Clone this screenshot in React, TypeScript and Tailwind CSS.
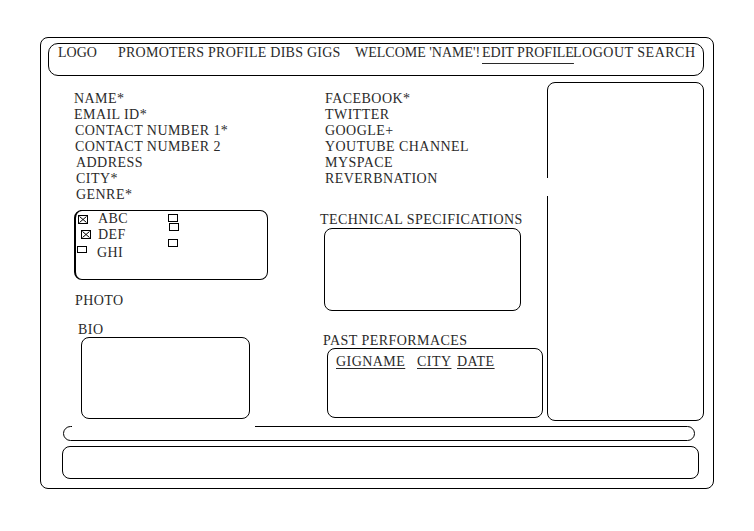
import React from "react";

const Box = ({ checked = false, w = 10, h = 9 }: { checked?: boolean; w?: number; h?: number }) => (
  <svg width={w} height={h} viewBox={`0 0 ${w} ${h}`} className="block shrink-0">
    <rect x={0.5} y={0.5} width={w - 1} height={h - 1} fill="white" stroke="black" strokeWidth={1} />
    {checked && (
      <>
        <line x1={1.5} y1={1.5} x2={w - 1.5} y2={h - 1.5} stroke="black" strokeWidth={1} />
        <line x1={w - 1.5} y1={1.5} x2={1.5} y2={h - 1.5} stroke="black" strokeWidth={1} />
      </>
    )}
  </svg>
);

const Label = ({ children, className = "" }: { children: React.ReactNode; className?: string }) => (
  <div className={`h-[16px] leading-[16px] whitespace-nowrap tracking-[0.45px] ${className}`}>
    <span className="relative top-[1px]">{children}</span>
  </div>
);

export default function App() {
  return (
    <div
      className="w-[754px] h-[531px] bg-white text-[14px] text-[#2a2a2a] overflow-hidden"
      style={{ fontFamily: '"Liberation Serif", "Times New Roman", serif' }}
    >
      <div className="ml-[40px] mt-[37px] w-[674px] h-[452px] border border-black rounded-[8px] flex flex-col">
        {/* Nav */}
        <div className="ml-[7px] mt-[5px] w-[656px] h-[33px] border border-black rounded-[10px] flex items-start pt-[1px] pl-[9px]">
          <span className="w-[60px] h-[16px] leading-[16px] whitespace-nowrap">LOGO</span>
          <span className="w-[237px] h-[16px] leading-[16px] whitespace-nowrap tracking-[0.25px]">
            PROMOTERS PROFILE DIBS GIGS
          </span>
          <span className="w-[127px] h-[16px] leading-[16px] whitespace-nowrap">WELCOME 'NAME'!</span>
          <span className="w-[91px] h-[16px] leading-[16px] whitespace-nowrap underline underline-offset-[6px] decoration-1">
            EDIT PROFILE
          </span>
          <span className="h-[16px] leading-[16px] whitespace-nowrap tracking-[0.5px]">LOGOUT SEARCH</span>
        </div>

        {/* Body */}
        <div className="mt-[6px] flex items-start pl-[33px]">
          {/* Left column */}
          <div className="w-[245px] flex flex-col pt-[8px]">
            <Label>NAME*</Label>
            <Label>EMAIL ID*</Label>
            <Label className="ml-[1px]">CONTACT NUMBER 1*</Label>
            <Label className="ml-[1px]">CONTACT NUMBER 2</Label>
            <Label className="ml-[2px]">ADDRESS</Label>
            <Label className="ml-[2px]">CITY*</Label>
            <Label className="ml-[2px]">GENRE*</Label>

            <div className="relative mt-[8px] w-[194px] h-[70px] border border-black border-l-2 rounded-[8px] flex tracking-[0.45px]">
              <div className="absolute top-[-1px] left-[4px] w-[102px] h-[1px] bg-black" />
              <div className="w-[92px] flex flex-col">
                <div className="h-[16px] flex items-center">
                  <div className="w-[22px] pl-[2px]">
                    <Box checked />
                  </div>
                  <span className="leading-[16px]">ABC</span>
                </div>
                <div className="h-[16px] flex items-center">
                  <div className="w-[22px] pl-[5px] -mt-[2px]">
                    <Box checked />
                  </div>
                  <span className="leading-[16px]">DEF</span>
                </div>
                <div className="mt-[2px] h-[16px] flex items-center">
                  <div className="w-[21px] pl-[1px] -mt-[8px]">
                    <Box w={10} h={7} />
                  </div>
                  <span className="leading-[16px]">GHI</span>
                </div>
              </div>
              <div className="flex flex-col">
                <div className="mt-[3px]">
                  <Box w={10} h={8} />
                </div>
                <div className="mt-[1px] ml-[1px]">
                  <Box w={10} h={8} />
                </div>
                <div className="mt-[8px]">
                  <Box w={10} h={8} />
                </div>
              </div>
            </div>

            <Label className="mt-[12px] ml-[1px]">PHOTO</Label>
            <Label className="mt-[13px] ml-[4px]">BIO</Label>
            <div className="ml-[7px] w-[169px] h-[82px] border border-black rounded-[8px]" />
          </div>

          {/* Middle column */}
          <div className="w-[228px] flex flex-col pt-[8px]">
            <Label className="ml-[6px]">FACEBOOK*</Label>
            <Label className="ml-[6px]">TWITTER</Label>
            <Label className="ml-[6px]">GOOGLE+</Label>
            <Label className="ml-[6px]">YOUTUBE CHANNEL</Label>
            <Label className="ml-[6px]">MYSPACE</Label>
            <Label className="ml-[6px]">REVERBNATION</Label>

            <Label className="mt-[25px] ml-[1px]">TECHNICAL SPECIFICATIONS</Label>
            <div className="mt-[1px] ml-[5px] w-[197px] h-[83px] border border-black rounded-[8px]" />

            <Label className="mt-[21px] ml-[4px]">PAST PERFORMACES</Label>
            <div className="ml-[8px] w-[216px] h-[70px] border border-black rounded-[8px] pt-[5px] pl-[8px] flex items-start tracking-[0.45px]">
              <span className="w-[81px] h-[16px] leading-[16px] whitespace-nowrap">
                <span className="underline underline-offset-[2px] decoration-1">GIGNAME</span>
              </span>
              <span className="w-[40px] h-[16px] leading-[16px] whitespace-nowrap">
                <span className="underline underline-offset-[2px] decoration-1">CITY</span>
              </span>
              <span className="h-[16px] leading-[16px] whitespace-nowrap underline underline-offset-[2px] decoration-1">
                DATE
              </span>
            </div>
          </div>

          {/* Right panel */}
          <div className="relative w-[157px] h-[339px] border border-black rounded-[8px]">
            <div className="absolute left-[-1px] top-[95px] w-[3px] h-[18px] bg-white" />
          </div>
        </div>

        {/* Bar 1 */}
        <div className="relative mt-[5px] ml-[22px] w-[632px] h-[15px] border border-black rounded-full">
          <div className="absolute top-[-1px] left-[8px] w-[183px] h-[2px] bg-white" />
        </div>

        {/* Bar 2 */}
        <div className="mt-[5px] ml-[21px] w-[637px] h-[33px] border border-black rounded-[8px]" />
      </div>
    </div>
  );
}
